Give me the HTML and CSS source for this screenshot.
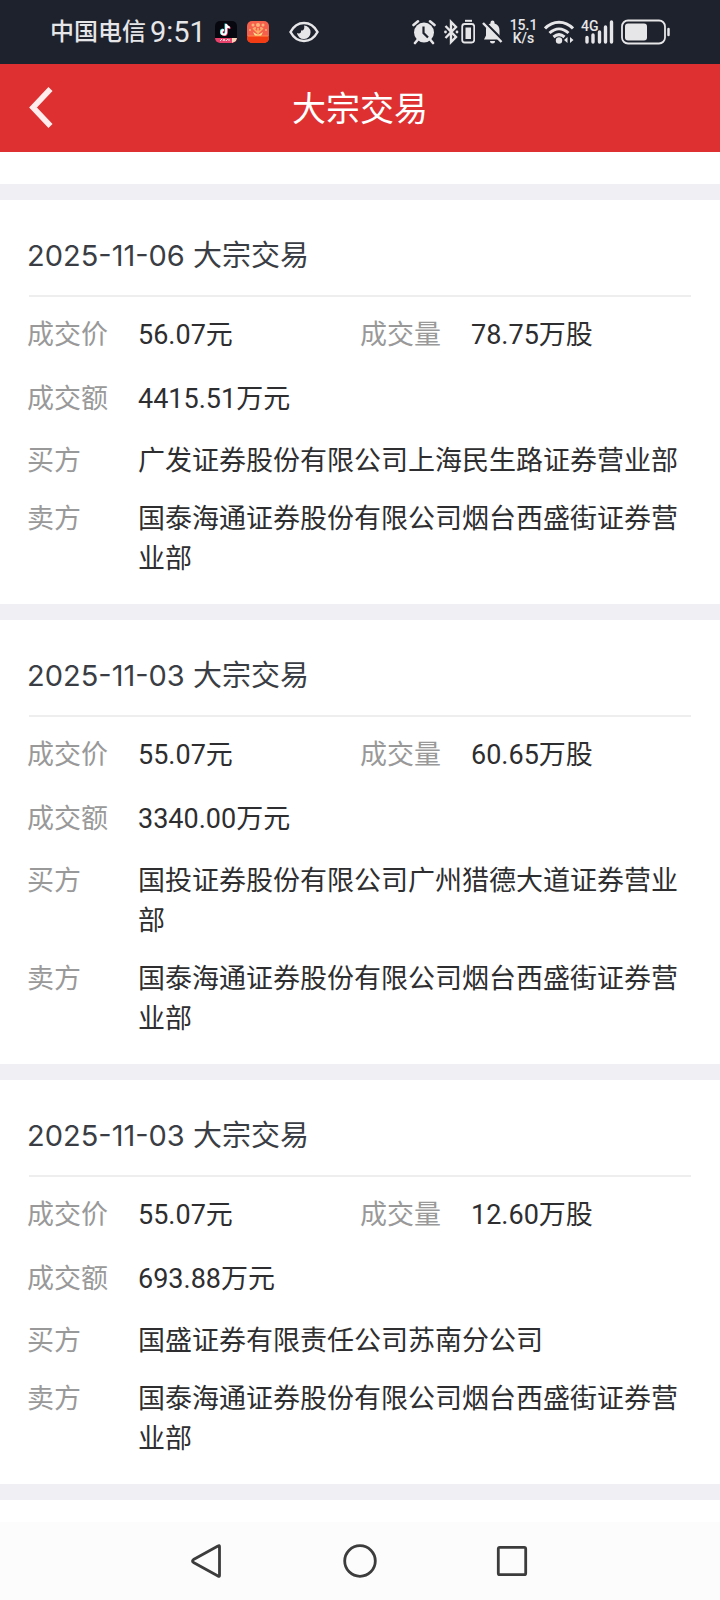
FILE: index.html
```html
<!DOCTYPE html>
<html lang="zh-CN">
<head>
<meta charset="utf-8">
<meta name="viewport" content="width=device-width, initial-scale=1">
<title>大宗交易</title>
<link rel="stylesheet" href="styles.css">
</head>
<body>
<div class="status">
  <div class="status-left">
    <span class="carrier">中国电信</span>
    <span class="clock">9:51</span>
    <svg class="app" width="22" height="22" viewBox="0 0 22 22" aria-hidden="true">
      <clipPath id="app-a"><rect width="22" height="22" rx="5"/></clipPath>
      <g clip-path="url(#app-a)">
        <rect width="22" height="22" fill="#07070f"/>
        <path d="M11.200 3v8.300a2.300 2.300 0 1 1-2.300-2.300M11.200 3c.2 2 1.600 3.300 3.600 3.400" transform="translate(-.7 -.4)" fill="none" stroke="#35e4e0" stroke-width="2"/>
        <path d="M11.200 3v8.300a2.300 2.300 0 1 1-2.300-2.300M11.200 3c.2 2 1.600 3.300 3.600 3.400" transform="translate(.7 .5)" fill="none" stroke="#f0386b" stroke-width="2"/>
        <path d="M11.200 3v8.300a2.300 2.300 0 1 1-2.300-2.300M11.200 3c.2 2 1.600 3.300 3.600 3.400" fill="none" stroke="#fff" stroke-width="2"/>
        <path d="M0 17h22v5H0z" fill="#e8416c"/>
        <path d="M5 20l2-2M8 20l1-2 1 2M11 20l2-2M14 18v2" stroke="#ffe3e3" fill="none"/>
        <path d="M17 17h5l-1 3-4 2z" fill="#f5d8b8"/>
      </g>
    </svg>
    <svg class="app" width="22" height="22" viewBox="0 0 22 22" aria-hidden="true">
      <clipPath id="app-b"><rect width="22" height="22" rx="5"/></clipPath>
      <g clip-path="url(#app-b)">
        <rect width="22" height="22" fill="#f4604c"/>
        <path d="M11 15V7M11 12L6 7M11 12l5-5" stroke="#ffb066" stroke-width="1.500" fill="none"/>
        <g fill="#ffb27a"><circle cx="11" cy="4" r="2"/><circle cx="6" cy="4" r="1.500"/><circle cx="16" cy="4" r="1.500"/><circle cx="3" cy="9" r="1"/><circle cx="19" cy="9" r="1"/><circle cx="8" cy="7" r="1"/><circle cx="14" cy="7" r="1"/></g>
        <path d="M6 11l5 3 5-3-2 4H8z" fill="#ffe08a"/>
        <path d="M0 15h22v7H0z" fill="#f23c14"/>
        <path d="M1 15h20" stroke="#ff8a4a"/>
      </g>
    </svg>
    <svg class="eye" width="30" height="22" viewBox="0 0 30 22" aria-hidden="true">
      <path d="M1.500 11C5 4.500 9.500 2 15 2s10 2.500 13.500 9C25 17.500 20.500 20 15 20S5 17.500 1.500 11z" fill="none" stroke="#e6e6e8" stroke-width="2.500"/>
      <path d="M15 4.500a6.800 6.800 0 1 1-7 7.500c2.500 1 4.500 0 4-2.500 2.500.5 4-2 3-5z" fill="#e6e6e8"/>
    </svg>
  </div>
  <div class="status-right">
    <svg width="25" height="26" viewBox="0 0 25 26" aria-hidden="true">
      <circle cx="12" cy="13.500" r="10" fill="#e6e6e8"/>
      <path d="M1.500 6L6 2.300M22.500 6L18 2.300M5.500 21l-2.500 3M18.500 21l2.500 3" stroke="#e6e6e8" stroke-width="2.600" stroke-linecap="round"/>
      <path d="M11.500 7.500v6.500l4.500 4.500" fill="none" stroke="#1e222d" stroke-width="2.200"/>
    </svg>
    <svg width="31" height="26" viewBox="0 0 31 26" aria-hidden="true">
      <path d="M1.500 7l10.500 11-5 5V3l5 5L1.500 19" fill="none" stroke="#e6e6e8" stroke-width="2.400"/>
      <circle cx="1.500" cy="13" r="1.400" fill="#e6e6e8"/><circle cx="13" cy="13" r="1.400" fill="#e6e6e8"/>
      <path d="M21 1.800h7" stroke="#e6e6e8" stroke-width="2"/>
      <rect x="18.200" y="5" width="12" height="18.500" rx="2.500" fill="none" stroke="#e6e6e8" stroke-width="1.800"/>
      <path d="M21.500 8.500h5.500v11.500h-5.500z" fill="#e6e6e8"/>
    </svg>
    <svg width="21" height="26" viewBox="0 0 21 26" aria-hidden="true">
      <path d="M8.500 4.500V3.500a2 2 0 0 1 4 0v1c3.500 1 5 3.500 5 7v5l2.500 4H2l2-4v-5c0-3.500 1-6 4.500-7z" fill="#e6e6e8"/>
      <path d="M8 22h5a2.500 2.500 0 0 1-5 0z" fill="#e6e6e8"/>
      <path d="M2.500 3L21 21.500" stroke="#1e222d" stroke-width="2.500"/>
      <path d="M1 4l18.500 19" stroke="#e6e6e8" stroke-width="2.500"/>
    </svg>
    <div class="speed"><span>15.1</span><span>K/s</span></div>
    <svg width="30" height="26" viewBox="0 0 30 26" aria-hidden="true">
      <path d="M1 9.500c8-8.500 20-8.500 28 0M5.500 14c6-5.500 13-5.500 19 0M9.500 18c3.500-3 7.500-3 11 0" fill="none" stroke="#e6e6e8" stroke-width="3"/>
      <circle cx="15" cy="21.500" r="3.200" fill="#e6e6e8"/>
      <path d="M23.500 18v6l-3.500-3zM26 18v6l3.500-3z" fill="#e6e6e8"/>
    </svg>
    <div class="signal">
      <span class="net">4G</span>
      <svg width="33" height="26" viewBox="0 0 33 26" aria-hidden="true">
        <path d="M6 18.500V23M12 16V23M18.500 13V23M24.500 8V23M30.500 3V23" stroke="#e6e6e8" stroke-width="3.400" stroke-linecap="round"/>
      </svg>
    </div>
    <svg width="49" height="26" viewBox="0 0 49 26" aria-hidden="true">
      <rect x="1" y="1.500" width="43" height="23" rx="6" fill="none" stroke="#e6e6e8" stroke-width="1.800"/>
      <rect x="4" y="4.500" width="22" height="17" rx="3" fill="#e6e6e8"/>
      <path d="M47.500 10v6" stroke="#e6e6e8" stroke-width="2.500" stroke-linecap="round"/>
    </svg>
  </div>
</div>

<header class="header">
  <button class="back" type="button" aria-label="返回">
    <svg width="25" height="42" viewBox="0 0 25 42" aria-hidden="true"><path d="M22.500 2L5 20.500l17.500 18.500" fill="none" stroke="#ffecec" stroke-width="5.600"/></svg>
  </button>
  <h1 class="header-title">大宗交易</h1>
</header>

<main class="list">
  <section class="card">
    <h2 class="card-title"><time>2025-11-06</time> 大宗交易</h2>
    <dl class="rows">
      <div class="row price"><dt>成交价</dt><dd>56.07元</dd></div>
      <div class="row volume"><dt>成交量</dt><dd>78.75万股</dd></div>
      <div class="row amount"><dt>成交额</dt><dd>4415.51万元</dd></div>
      <div class="row buyer"><dt>买方</dt><dd>广发证券股份有限公司上海民生路证券营业部</dd></div>
      <div class="row seller"><dt>卖方</dt><dd>国泰海通证券股份有限公司烟台西盛街证券营业部</dd></div>
    </dl>
  </section>
  <section class="card">
    <h2 class="card-title"><time>2025-11-03</time> 大宗交易</h2>
    <dl class="rows">
      <div class="row price"><dt>成交价</dt><dd>55.07元</dd></div>
      <div class="row volume"><dt>成交量</dt><dd>60.65万股</dd></div>
      <div class="row amount"><dt>成交额</dt><dd>3340.00万元</dd></div>
      <div class="row buyer"><dt>买方</dt><dd>国投证券股份有限公司广州猎德大道证券营业部</dd></div>
      <div class="row seller"><dt>卖方</dt><dd>国泰海通证券股份有限公司烟台西盛街证券营业部</dd></div>
    </dl>
  </section>
  <section class="card">
    <h2 class="card-title"><time>2025-11-03</time> 大宗交易</h2>
    <dl class="rows">
      <div class="row price"><dt>成交价</dt><dd>55.07元</dd></div>
      <div class="row volume"><dt>成交量</dt><dd>12.60万股</dd></div>
      <div class="row amount"><dt>成交额</dt><dd>693.88万元</dd></div>
      <div class="row buyer"><dt>买方</dt><dd>国盛证券有限责任公司苏南分公司</dd></div>
      <div class="row seller"><dt>卖方</dt><dd>国泰海通证券股份有限公司烟台西盛街证券营业部</dd></div>
    </dl>
  </section>
</main>

<nav class="nav">
  <button type="button" aria-label="后退"><svg width="36" height="36" viewBox="0 0 36 36" aria-hidden="true"><path d="M29.500 3.500v29q0 1.500-1.500.5L3.500 19.500q-2-1.500 0-3L28 3q1.500-1 1.500.5z" fill="none" stroke="#3c3c3c" stroke-width="2.800" stroke-linejoin="round"/></svg></button>
  <button type="button" aria-label="主页"><svg width="36" height="36" viewBox="0 0 36 36" aria-hidden="true"><circle cx="18" cy="18" r="15.300" fill="none" stroke="#3c3c3c" stroke-width="2.800"/></svg></button>
  <button type="button" aria-label="最近任务"><svg width="36" height="36" viewBox="0 0 36 36" aria-hidden="true"><rect x="4.300" y="4.300" width="27.400" height="27.400" rx="1.500" fill="none" stroke="#3c3c3c" stroke-width="2.800"/></svg></button>
</nav>
</body>
</html>
```
FILE: styles.css
```css
* {
  box-sizing: border-box;
}

body {
  margin: 0;
  min-height: 100vh;
  display: flex;
  flex-direction: column;
  background: #fff;
  color: #2e2e30;
  font-family: Roboto, "Noto Sans CJK SC", sans-serif;
}

button {
  display: flex;
  padding: 0;
  border: 0;
  background: none;
}

svg {
  display: block;
  flex: none;
}

.status {
  display: flex;
  justify-content: space-between;
  align-items: center;
  height: 64px;
  padding: 0 50px;
  background: #1e222d;
  color: #e6e6e8;
}

.status-left {
  display: flex;
  align-items: center;
  white-space: nowrap;
}

.carrier {
  font-size: 24px;
  line-height: 32px;
  font-weight: 500;
}

.clock {
  margin-left: 4px;
  font-size: 29px;
  line-height: 32px;
}

.app {
  margin-left: 9px;
}

.app + .app {
  margin-left: 10px;
}

.eye {
  margin-left: 20px;
}

.status-right {
  display: flex;
  align-items: center;
  gap: 7px;
}

.speed {
  display: flex;
  flex-direction: column;
  align-items: center;
  width: 27px;
  font-size: 14px;
  line-height: 13px;
  font-weight: 500;
}

.signal {
  position: relative;
}

.net {
  position: absolute;
  top: 0;
  left: 0;
  font-size: 14px;
  line-height: 14px;
  font-weight: 500;
}

.header {
  display: grid;
  grid-template-columns: 1fr auto 1fr;
  align-items: center;
  height: 88px;
  padding: 0 28px;
  background: #de3031;
  color: #fff;
}

.header-title {
  margin: 0;
  padding-top: 2px;
  font-size: 34px;
  line-height: 48px;
  font-weight: 400;
}

.list {
  flex: 1;
  padding-top: 32px;
}

.card {
  padding: 0 27px 25px;
  border-top: 16px solid #f0f0f4;
}

.card:last-child {
  border-bottom: 16px solid #f0f0f4;
}

.card-title {
  margin: 0;
  padding-top: 36px;
  color: #3a3e44;
  font-family: Inter, "Noto Sans CJK SC", sans-serif;
  font-size: 29px;
  line-height: 40px;
  font-weight: 400;
}

.card-title::after {
  content: "";
  display: block;
  height: 2px;
  margin: 19px 2px 0;
  background: #eee;
}

.rows {
  display: grid;
  grid-template-columns: 1fr 1fr;
  margin: 0;
  padding-top: 18px;
  font-size: 27px;
  line-height: 40px;
}

.row {
  display: grid;
  grid-template-columns: 111px 1fr;
}

.row dt {
  color: #999;
}

.row dd {
  margin: 0;
}

.amount,
.buyer,
.seller {
  grid-column: 1 / -1;
}

.amount {
  margin-top: 24px;
}

.buyer {
  margin-top: 22px;
}

.seller {
  margin-top: 18px;
}

.nav {
  display: flex;
  justify-content: center;
  align-items: center;
  gap: 116px;
  height: 78px;
  background: #fcfcfc;
}
```
